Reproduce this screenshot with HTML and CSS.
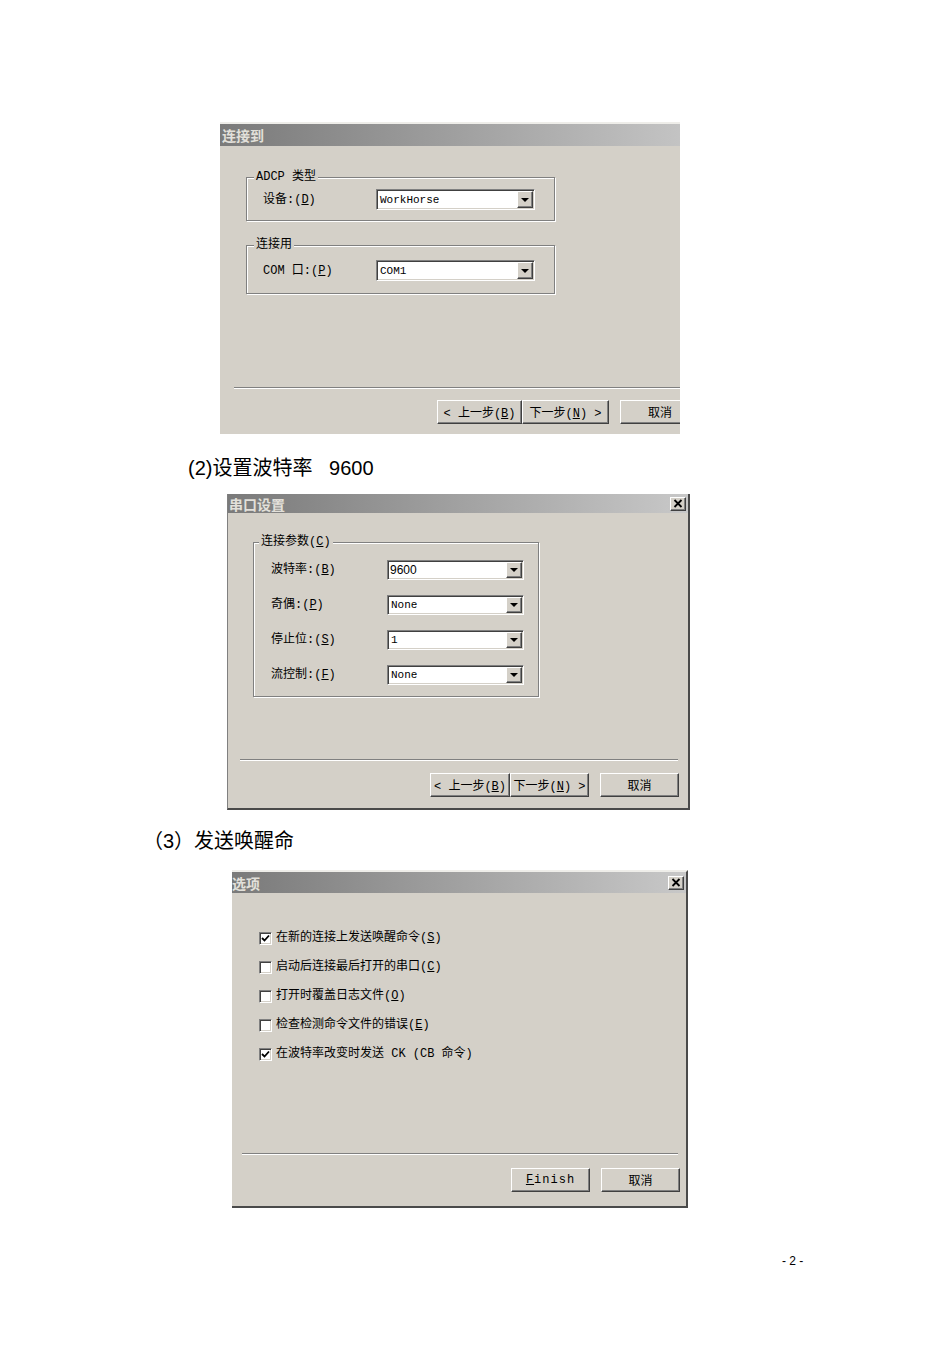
FILE: index.html
```html
<!DOCTYPE html>
<html lang="zh-CN">
<head>
    <meta charset="UTF-8">
    <meta name="viewport" content="width=device-width, initial-scale=1.0">
    <title>ADCP 连接设置</title>
    <link rel="stylesheet" href="styles.css">
</head>
<body>
    <div class="page">

        <!-- (1) 连接到 -->
        <div class="shot shot-connect">
            <div class="dlg dlg-connect">
                <div class="titlebar"><span class="title">连接到</span></div>
                <fieldset class="group group-adcp">
                    <legend>ADCP 类型</legend>
                    <div class="field">
                        <span class="label">设备:(<u>D</u>)</span>
                        <div class="combo"><span class="value">WorkHorse</span><span class="dd"></span></div>
                    </div>
                </fieldset>
                <fieldset class="group group-port">
                    <legend>连接用</legend>
                    <div class="field">
                        <span class="label">COM 口:(<u>P</u>)</span>
                        <div class="combo"><span class="value">COM1</span><span class="dd"></span></div>
                    </div>
                </fieldset>
                <div class="sep"></div>
                <div class="btn-row">
                    <div class="wizard-nav">
                        <button class="btn btn-back">&lt; 上一步(<u>B</u>)</button>
                        <button class="btn btn-next">下一步(<u>N</u>) &gt;</button>
                    </div>
                    <button class="btn btn-cancel">取消</button>
                </div>
            </div>
        </div>

        <p class="caption caption-baud">(2)设置波特率   9600</p>

        <!-- 串口设置 -->
        <div class="shot shot-serial">
            <div class="dlg dlg-serial">
                <div class="titlebar">
                    <span class="title">串口设置</span>
                    <span class="close"><svg width="10" height="9" viewBox="0 0 10 9"><path d="M1.5 1 L8.5 8 M8.5 1 L1.5 8" stroke="#000" stroke-width="1.8"/></svg></span>
                </div>
                <fieldset class="group group-params">
                    <legend>连接参数(<u>C</u>)</legend>
                    <div class="rows">
                        <div class="field">
                            <span class="label">波特率:(<u>B</u>)</span>
                            <div class="combo"><span class="value value-sans">9600</span><span class="dd"></span></div>
                        </div>
                        <div class="field">
                            <span class="label">奇偶:(<u>P</u>)</span>
                            <div class="combo"><span class="value">None</span><span class="dd"></span></div>
                        </div>
                        <div class="field">
                            <span class="label">停止位:(<u>S</u>)</span>
                            <div class="combo"><span class="value">1</span><span class="dd"></span></div>
                        </div>
                        <div class="field">
                            <span class="label">流控制:(<u>F</u>)</span>
                            <div class="combo"><span class="value">None</span><span class="dd"></span></div>
                        </div>
                    </div>
                </fieldset>
                <div class="sep"></div>
                <div class="btn-row">
                    <div class="wizard-nav">
                        <button class="btn btn-back">&lt; 上一步(<u>B</u>)</button>
                        <button class="btn btn-next">下一步(<u>N</u>) &gt;</button>
                    </div>
                    <button class="btn btn-cancel">取消</button>
                </div>
            </div>
        </div>

        <p class="caption caption-wake">（3）发送唤醒命</p>

        <!-- 选项 -->
        <div class="shot shot-options">
            <div class="dlg dlg-options">
                <div class="titlebar">
                    <span class="title">选项</span>
                    <span class="close"><svg width="10" height="9" viewBox="0 0 10 9"><path d="M1.5 1 L8.5 8 M8.5 1 L1.5 8" stroke="#000" stroke-width="1.8"/></svg></span>
                </div>
                <div class="options">
                    <div class="check-row">
                        <span class="checkbox"><svg width="9" height="9" viewBox="0 0 9 9"><path d="M1 4 L3.5 6.5 L8 1.5" fill="none" stroke="#000" stroke-width="1.8"/></svg></span>
                        <span>在新的连接上发送唤醒命令(<u>S</u>)</span>
                    </div>
                    <div class="check-row">
                        <span class="checkbox"></span>
                        <span>启动后连接最后打开的串口(<u>C</u>)</span>
                    </div>
                    <div class="check-row">
                        <span class="checkbox"></span>
                        <span>打开时覆盖日志文件(<u>O</u>)</span>
                    </div>
                    <div class="check-row">
                        <span class="checkbox"></span>
                        <span>检查检测命令文件的错误(<u>E</u>)</span>
                    </div>
                    <div class="check-row">
                        <span class="checkbox"><svg width="9" height="9" viewBox="0 0 9 9"><path d="M1 4 L3.5 6.5 L8 1.5" fill="none" stroke="#000" stroke-width="1.8"/></svg></span>
                        <span>在波特率改变时发送 CK (CB 命令)</span>
                    </div>
                </div>
                <div class="sep"></div>
                <div class="btn-row">
                    <button class="btn btn-finish"><u>F</u>inish</button>
                    <button class="btn btn-cancel">取消</button>
                </div>
            </div>
        </div>

        <p class="page-num">- 2 -</p>
    </div>
</body>
</html>
```

FILE: styles.css
```css
* {
    box-sizing: border-box;
}
body {
    margin: 0;
    background: #fff;
    color: #000;
    font-family: "Liberation Sans", "Noto Sans CJK SC", sans-serif;
}
.page {
    padding-top: 122px;
}

/* captions between screenshots */
.caption {
    margin: 0;
    font-size: 20px;
    line-height: 24px;
    white-space: pre;
}
.caption-baud {
    margin: 22px 0 0 188px;
}
.caption-wake {
    margin: 19px 0 0 143px;
}
.page-num {
    margin: 45px 0 0 782px;
    font-size: 12px;
    line-height: 16px;
}

/* screenshot frames */
.shot {
    overflow: hidden;
}
.shot-connect {
    width: 460px;
    margin-left: 220px;
}
.shot-serial {
    margin: 14px 0 0 227px;
}
.shot-options {
    margin: 17px 0 0 232px;
}

/* dialog basics */
.dlg {
    display: flex;
    flex-direction: column;
    background: #d4d0c8;
    font-family: "Liberation Mono", "Noto Sans CJK SC", monospace;
    font-size: 12px;
    line-height: 14px;
}
.dlg-connect {
    width: 490px;
    height: 312px;
    border-top: 2px solid #eeede9;
}
.dlg-serial {
    width: 463px;
    height: 316px;
    border-left: 1px solid #808080;
    border-right: 2px solid #4a4a4a;
    border-bottom: 2px solid #4a4a4a;
}
.dlg-options {
    width: 456px;
    height: 338px;
    border-top: 2px solid #eeede9;
    border-right: 2px solid #4a4a4a;
    border-bottom: 2px solid #4a4a4a;
}
.titlebar {
    flex: none;
    display: flex;
    align-items: center;
    justify-content: space-between;
    padding: 0 2px;
    background: linear-gradient(to right, #7a7a7a, #c8c8c8);
}
.dlg-connect .titlebar {
    height: 22px;
}
.dlg-serial .titlebar {
    height: 19px;
    padding-left: 1px;
}
.dlg-options .titlebar {
    height: 21px;
    padding-left: 0;
}
.title {
    font-family: "Noto Sans CJK SC", sans-serif;
    font-weight: bold;
    font-size: 14px;
    color: #e2e0da;
}
.close {
    width: 16px;
    height: 14px;
    display: flex;
    align-items: center;
    justify-content: center;
    background: #d4d0c8;
    border: 1px solid;
    border-color: #fff #404040 #404040 #fff;
    box-shadow: inset -1px -1px 0 #808080;
}

/* group boxes */
.group {
    margin: 0;
    padding: 0;
    border: 1px solid #808080;
    box-shadow: 1px 1px 0 #fff, inset 1px 1px 0 #fff;
}
.group legend {
    margin-left: 7px;
    padding: 0 2px;
    background: #d4d0c8;
    line-height: 14px;
}
.group-adcp {
    width: 309px;
    margin: 24px 0 0 26px;
    padding: 5px 0 10px;
}
.group-port {
    width: 309px;
    margin: 17px 0 0 26px;
    padding: 8px 0 12px;
}
.group-params {
    width: 286px;
    margin: 22px 0 0 25px;
    padding: 11px 0 11px;
}
.group-params legend {
    margin-left: 5px;
}
.rows {
    display: flex;
    flex-direction: column;
    gap: 15px;
}
.field {
    display: flex;
    align-items: center;
    padding-left: 16px;
}
.label {
    width: 113px;
}
.group-params .field {
    padding-left: 17px;
}
.group-params .label {
    width: 116px;
}

/* combo boxes */
.combo {
    display: flex;
    width: 159px;
    height: 21px;
    padding: 1px;
    background: #fff;
    border: 1px solid;
    border-color: #808080 #fff #fff #808080;
    box-shadow: inset 1px 1px 0 #404040, inset -1px -1px 0 #d4d0c8;
}
.group-params .combo {
    width: 137px;
    height: 20px;
}
.value {
    flex: 1;
    display: flex;
    align-items: center;
    padding-left: 2px;
    font-family: "Liberation Mono", monospace;
    font-size: 11px;
}
.value-sans {
    font-family: "Liberation Sans", sans-serif;
    font-size: 12px;
    padding-left: 1px;
}
.dd {
    width: 16px;
    display: flex;
    align-items: center;
    justify-content: center;
    background: #d4d0c8;
    border: 1px solid;
    border-color: #fff #404040 #404040 #fff;
    box-shadow: inset -1px -1px 0 #808080;
}
.dd::after {
    content: "";
    border-left: 4px solid transparent;
    border-right: 4px solid transparent;
    border-top: 4px solid #000;
}

/* check boxes */
.options {
    display: flex;
    flex-direction: column;
    gap: 13px;
    padding: 37px 0 0 27px;
}
.check-row {
    display: flex;
    align-items: center;
    gap: 4px;
    height: 16px;
}
.checkbox {
    width: 13px;
    height: 13px;
    display: flex;
    align-items: center;
    justify-content: center;
    background: #fff;
    border: 1px solid;
    border-color: #808080 #fff #fff #808080;
    box-shadow: inset 1px 1px 0 #404040, inset -1px -1px 0 #d4d0c8;
}

/* separator + buttons */
.sep {
    flex: none;
    height: 2px;
    border-top: 1px solid #808080;
    border-bottom: 1px solid #fff;
    margin-top: auto;
}
.dlg-connect .sep {
    margin: auto 10px 0 14px;
}
.dlg-serial .sep {
    margin: auto 10px 0 12px;
}
.dlg-options .sep {
    margin: auto 8px 0 10px;
}
.btn-row {
    display: flex;
    justify-content: flex-end;
    gap: 11px;
}
.dlg-connect .btn-row {
    margin: 11px 10px 10px 0;
}
.dlg-serial .btn-row {
    margin: 12px 9px 11px 0;
}
.dlg-options .btn-row {
    margin: 13px 6px 14px 0;
}
.wizard-nav {
    display: flex;
}
.btn {
    height: 24px;
    width: 79px;
    padding: 0;
    background: #d4d0c8;
    color: #000;
    font-family: "Liberation Mono", "Noto Sans CJK SC", monospace;
    font-size: 12px;
    border: 1px solid;
    border-color: #fff #404040 #404040 #fff;
    box-shadow: inset -1px -1px 0 #808080;
}
.dlg-connect .btn-back {
    width: 85px;
}
.dlg-connect .btn-next {
    width: 87px;
}
.dlg-connect .btn-cancel {
    width: 80px;
}
.dlg-serial .btn-back {
    width: 80px;
}
.btn-finish {
    font-family: "Liberation Mono", monospace;
    letter-spacing: 1px;
}
```
